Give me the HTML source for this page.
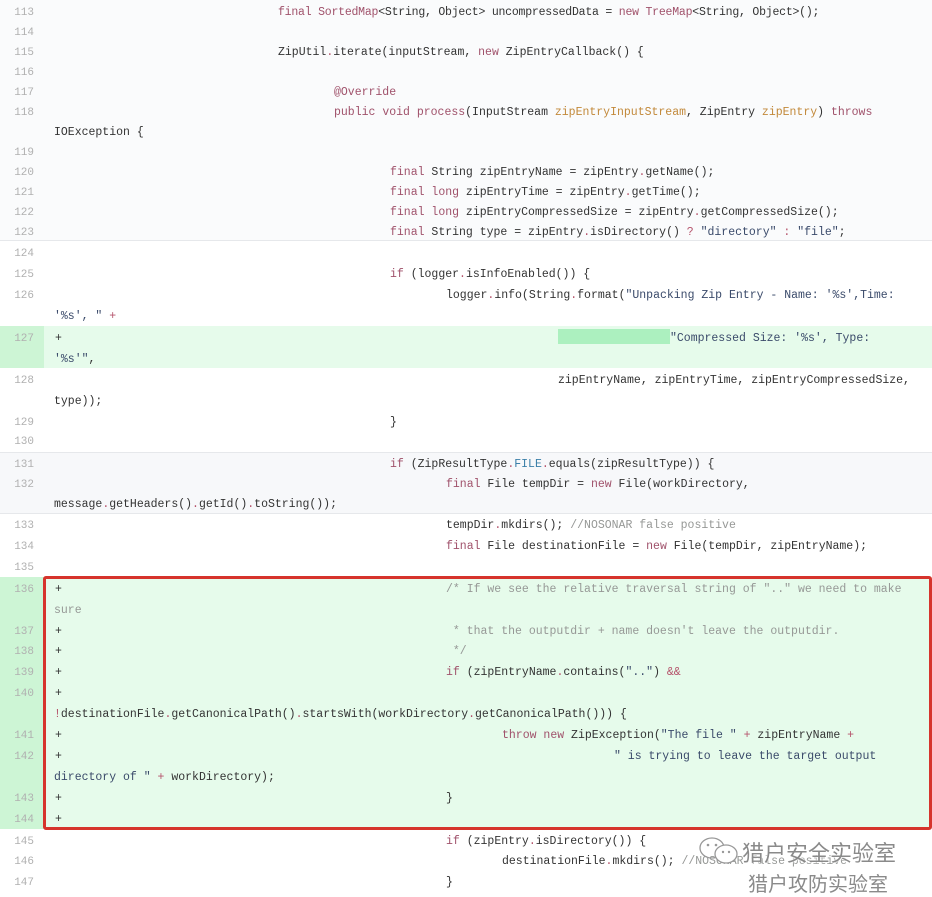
<!DOCTYPE html>
<html><head><meta charset="utf-8"><style>
*{margin:0;padding:0;box-sizing:border-box}
body{width:932px;height:892px;background:#fff;position:relative;overflow:hidden;font-family:"Liberation Mono",monospace;font-size:11.5px;color:#333}
.bg{position:absolute;left:0;width:932px}
.gut{position:absolute;left:0;width:44px}
.r{position:absolute;left:0;width:932px;height:20px;line-height:20px;white-space:pre;margin-top:2px}
.n{position:absolute;right:898px;color:#b0b0b0;font-size:11px}
.c{position:absolute}
.k{color:#a0526b}
.p{color:#c2893a}
.s{color:#3a4a6a}
.cm{color:#969896}
.b{color:#3b7fa8}
.o{color:#b5536b}
.wm{position:absolute;font-family:"Liberation Sans","Noto Sans CJK SC",sans-serif;color:#8a8a8a;white-space:nowrap;text-shadow:0 0 2px #fff,0 0 2px #fff}
</style></head><body>
<div class="bg" style="top:0;height:241px;background:#fafbfc;border-bottom:1px solid #e6e8eb"></div>
<div class="bg" style="top:326px;height:42px;background:#e6fbeb"></div>
<div class="gut" style="top:326px;height:42px;background:#cdf5d5"></div>
<div class="bg" style="top:452px;height:62px;background:#f7f8fa;border-top:1px solid #e6e8eb;border-bottom:1px solid #e6e8eb"></div>
<div class="bg" style="top:577px;height:252px;background:#e6fbeb"></div>
<div class="gut" style="top:577px;height:252px;background:#cdf5d5"></div>
<div style="position:absolute;left:558px;top:329px;width:112px;height:15px;background:#acf0bf"></div>

<div class="r" style="top:1px"><span class="n">113</span><span class="c" style="left:278px;letter-spacing:-0.22px"><span class="k">final</span> <span class="k">SortedMap</span>&lt;String, Object&gt; uncompressedData = <span class="k">new</span> <span class="k">TreeMap</span>&lt;String, Object&gt;();</span></div>
<div class="r" style="top:21px"><span class="n">114</span></div>
<div class="r" style="top:41px"><span class="n">115</span><span class="c" style="left:278px">ZipUtil<span class="o">.</span>iterate(inputStream, <span class="k">new</span> ZipEntryCallback() {</span></div>
<div class="r" style="top:61px"><span class="n">116</span></div>
<div class="r" style="top:81px"><span class="n">117</span><span class="c" style="left:334px"><span class="k">@Override</span></span></div>
<div class="r" style="top:101px"><span class="n">118</span><span class="c" style="left:334px"><span class="k">public</span> <span class="k">void</span> <span class="k">process</span>(InputStream <span class="p">zipEntryInputStream</span>, ZipEntry <span class="p">zipEntry</span>) <span class="k">throws</span></span></div>
<div class="r" style="top:121px"><span class="c" style="left:54px">IOException {</span></div>
<div class="r" style="top:141px"><span class="n">119</span></div>
<div class="r" style="top:161px"><span class="n">120</span><span class="c" style="left:390px"><span class="k">final</span> String zipEntryName = zipEntry<span class="o">.</span>getName();</span></div>
<div class="r" style="top:181px"><span class="n">121</span><span class="c" style="left:390px"><span class="k">final</span> <span class="k">long</span> zipEntryTime = zipEntry<span class="o">.</span>getTime();</span></div>
<div class="r" style="top:201px"><span class="n">122</span><span class="c" style="left:390px"><span class="k">final</span> <span class="k">long</span> zipEntryCompressedSize = zipEntry<span class="o">.</span>getCompressedSize();</span></div>
<div class="r" style="top:221px"><span class="n">123</span><span class="c" style="left:390px"><span class="k">final</span> String type = zipEntry<span class="o">.</span>isDirectory() <span class="o">?</span> <span class="s">"directory"</span> <span class="o">:</span> <span class="s">"file"</span>;</span></div>
<div class="r" style="top:242px"><span class="n">124</span></div>
<div class="r" style="top:263px"><span class="n">125</span><span class="c" style="left:390px"><span class="k">if</span> (logger<span class="o">.</span>isInfoEnabled()) {</span></div>
<div class="r" style="top:284px"><span class="n">126</span><span class="c" style="left:446px">logger<span class="o">.</span>info(String<span class="o">.</span>format(<span class="s">"Unpacking Zip Entry - Name: '%s',Time:</span></span></div>
<div class="r" style="top:305px"><span class="c" style="left:54px"><span class="s">'%s', "</span> <span class="o">+</span></span></div>
<div class="r" style="top:327px"><span class="n">127</span><span class="c" style="left:55px">+</span><span class="c" style="left:670px"><span class="s">"Compressed Size: '%s', Type:</span></span></div>
<div class="r" style="top:348px"><span class="c" style="left:54px"><span class="s">'%s'"</span>,</span></div>
<div class="r" style="top:369px"><span class="n">128</span><span class="c" style="left:558px">zipEntryName, zipEntryTime, zipEntryCompressedSize,</span></div>
<div class="r" style="top:390px"><span class="c" style="left:54px">type));</span></div>
<div class="r" style="top:411px"><span class="n">129</span><span class="c" style="left:390px">}</span></div>
<div class="r" style="top:430px"><span class="n">130</span></div>
<div class="r" style="top:453px"><span class="n">131</span><span class="c" style="left:390px"><span class="k">if</span> (ZipResultType<span class="o">.</span><span class="b">FILE</span><span class="o">.</span>equals(zipResultType)) {</span></div>
<div class="r" style="top:473px"><span class="n">132</span><span class="c" style="left:446px"><span class="k">final</span> File tempDir = <span class="k">new</span> File(workDirectory,</span></div>
<div class="r" style="top:493px"><span class="c" style="left:54px">message<span class="o">.</span>getHeaders()<span class="o">.</span>getId()<span class="o">.</span>toString());</span></div>
<div class="r" style="top:514px"><span class="n">133</span><span class="c" style="left:446px">tempDir<span class="o">.</span>mkdirs(); <span class="cm">//NOSONAR false positive</span></span></div>
<div class="r" style="top:535px"><span class="n">134</span><span class="c" style="left:446px"><span class="k">final</span> File destinationFile = <span class="k">new</span> File(tempDir, zipEntryName);</span></div>
<div class="r" style="top:556px"><span class="n">135</span></div>
<div class="r" style="top:578px"><span class="n">136</span><span class="c" style="left:55px">+</span><span class="c" style="left:446px"><span class="cm">/* If we see the relative traversal string of ".." we need to make</span></span></div>
<div class="r" style="top:599px"><span class="c" style="left:54px"><span class="cm">sure</span></span></div>
<div class="r" style="top:620px"><span class="n">137</span><span class="c" style="left:55px">+</span><span class="c" style="left:446px"><span class="cm"> * that the outputdir + name doesn't leave the outputdir.</span></span></div>
<div class="r" style="top:640px"><span class="n">138</span><span class="c" style="left:55px">+</span><span class="c" style="left:446px"><span class="cm"> */</span></span></div>
<div class="r" style="top:661px"><span class="n">139</span><span class="c" style="left:55px">+</span><span class="c" style="left:446px"><span class="k">if</span> (zipEntryName<span class="o">.</span>contains(<span class="s">".."</span>) <span class="o">&amp;&amp;</span></span></div>
<div class="r" style="top:682px"><span class="n">140</span><span class="c" style="left:55px">+</span></div>
<div class="r" style="top:703px"><span class="c" style="left:54px"><span class="o">!</span>destinationFile<span class="o">.</span>getCanonicalPath()<span class="o">.</span>startsWith(workDirectory<span class="o">.</span>getCanonicalPath())) {</span></div>
<div class="r" style="top:724px"><span class="n">141</span><span class="c" style="left:55px">+</span><span class="c" style="left:502px"><span class="k">throw</span> <span class="k">new</span> ZipException(<span class="s">"The file "</span> <span class="o">+</span> zipEntryName <span class="o">+</span></span></div>
<div class="r" style="top:745px"><span class="n">142</span><span class="c" style="left:55px">+</span><span class="c" style="left:614px"><span class="s">" is trying to leave the target output</span></span></div>
<div class="r" style="top:766px"><span class="c" style="left:54px"><span class="s">directory of "</span> <span class="o">+</span> workDirectory);</span></div>
<div class="r" style="top:787px"><span class="n">143</span><span class="c" style="left:55px">+</span><span class="c" style="left:446px">}</span></div>
<div class="r" style="top:808px"><span class="n">144</span><span class="c" style="left:55px">+</span></div>
<div class="r" style="top:830px"><span class="n">145</span><span class="c" style="left:446px"><span class="k">if</span> (zipEntry<span class="o">.</span>isDirectory()) {</span></div>
<div class="r" style="top:850px"><span class="n">146</span><span class="c" style="left:502px">destinationFile<span class="o">.</span>mkdirs(); <span class="cm">//NOSONAR false positive</span></span></div>
<div class="r" style="top:871px"><span class="n">147</span><span class="c" style="left:446px">}</span></div>

<div style="position:absolute;left:43px;top:576px;width:889px;height:254px;border:3px solid #d6342c;border-radius:3px"></div>

<svg style="position:absolute;left:698px;top:836px" width="44" height="30" viewBox="0 0 44 30"><ellipse cx="14" cy="12" rx="12" ry="10" fill="none" stroke="#999" stroke-width="1.3"/><ellipse cx="28" cy="18" rx="11" ry="9" fill="#fff" stroke="#999" stroke-width="1.3"/><circle cx="10" cy="9" r="1.3" fill="#999"/><circle cx="18" cy="9" r="1.3" fill="#999"/><circle cx="25" cy="16" r="1.2" fill="#999"/><circle cx="31" cy="16" r="1.2" fill="#999"/></svg>
<div class="wm" style="left:742px;top:836px;font-size:22px">猎户安全实验室</div>
<div class="wm" style="left:748px;top:868px;font-size:20px">猎户攻防实验室</div>
</body></html>
